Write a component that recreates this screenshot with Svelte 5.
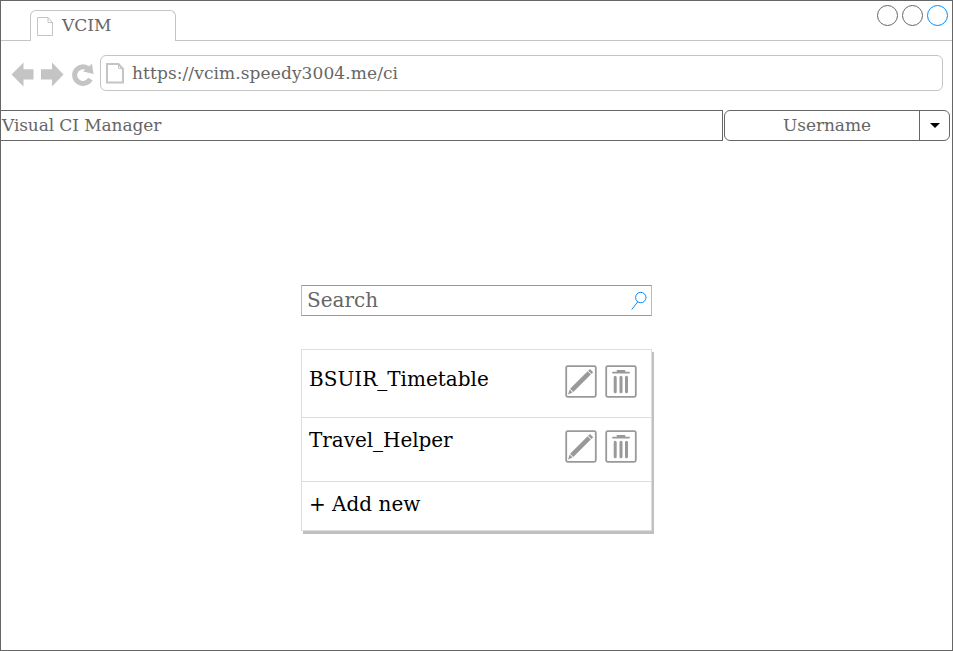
<script>
  const projects = [
    { name: 'BSUIR_Timetable', cls: 'first' },
    { name: 'Travel_Helper', cls: 'second' }
  ];
</script>

<div class="window">
  <header class="tabs">
    <div class="lead"></div>
    <div class="tab">
      <svg width="16" height="20" viewBox="0 0 16 20" fill="none" stroke="#c4c4c4"><path d="M.5.5H11L15.500 5.500V18.500H.5ZM11 .5V5.500H15.500" /></svg>
      <span>VCIM</span>
    </div>
    <div class="rest">
      <svg width="76" height="24" viewBox="0 0 76 24" fill="none" stroke="#666">
        <circle cx="11.500" cy="11.500" r="10" /><circle cx="36.500" cy="11.500" r="10" /><circle cx="61.500" cy="11.500" r="10" stroke="#008cff" />
      </svg>
    </div>
  </header>

  <div class="toolbar">
    <svg class="nav" width="84" height="26" viewBox="0 0 84 26" fill="#c4c4c4">
      <path d="M.5 12.500L12.500 .5V7.200H22.500V17.500H12.500V24.500Z" />
      <path d="M52.500 12.500L41 .5V7.200H30V17.500H41V24.500Z" />
      <path d="M79.300 17A8.300 8.300 0 1 1 77.300 6.800" fill="none" stroke="#c4c4c4" stroke-width="5" />
      <path d="M81 1.800L82.500 12L72 9.500Z" />
    </svg>
    <div class="address">
      <svg width="18" height="21" viewBox="0 0 18 21" fill="none" stroke="#c4c4c4" stroke-width="2"><path d="M1 1H12.500L17 6V19.500H1Z" /><path d="M12.500 1V5.500H17" stroke-width="1" /></svg>
      <span>https://vcim.speedy3004.me/ci</span>
    </div>
  </div>

  <div class="appbar">
    <div class="title">Visual CI Manager</div>
    <div class="user">
      <span class="name">Username</span>
      <span class="arrow"><svg width="10" height="5" viewBox="0 0 10 5"><path d="M0 0H10L5 5Z" /></svg></span>
    </div>
  </div>

  <main>
    <div class="search">
      <span>Search</span>
      <svg width="16" height="19" viewBox="0 0 16 19" fill="none" stroke="#008cff"><circle cx="9.800" cy="6.500" r="5.200" /><path d="M6.800 10.800L.7 18.500" /></svg>
    </div>
    <div class="list">
      {#each projects as p}
        <div class="row {p.cls}">
          <span>{p.name}</span>
          <div class="actions">
            <svg width="32" height="33" viewBox="0 0 32 33" fill="#999">
              <rect x="1.200" y="1.200" width="29.600" height="30.600" rx="1.500" fill="none" stroke="#999" stroke-width="1.800" />
              <path d="M22.600 6.300L25.800 9.500L8.300 27L5.100 23.800ZM4.700 24.600L7.500 27.400L3 29.500ZM23.200 5.700L25 4L28.200 7.200L26.400 8.900Z" />
            </svg>
            <svg width="32" height="33" viewBox="0 0 32 33" fill="none" stroke="#999">
              <rect x="1.200" y="1.200" width="29.600" height="30.600" rx="1.500" stroke-width="1.800" />
              <path d="M8 7.600H24M12.500 6H19.500" stroke-width="1.900" stroke-linecap="round" />
              <path d="M10.200 12.300V26.800M16 12.300V26.800M21.500 12.300V26.800" stroke-width="3" stroke-linecap="round" />
            </svg>
          </div>
        </div>
      {/each}
      <div class="row add"><span>+ Add new</span></div>
    </div>
  </main>
</div>

<style>
  :global(body) { margin: 0; background: #fff; }
  svg { display: block; flex: none; }
  .window {
    box-sizing: border-box; width: 953px; height: 651px; border: 1px solid #666;
    font: 17px/20px "DejaVu Serif", serif; color: #666; background: #fff;
    display: flex; flex-direction: column; overflow: hidden; white-space: nowrap;
  }
  .window div, header { box-sizing: border-box; }
  .tabs { display: flex; height: 40px; flex: none; }
  .lead { width: 29px; border-bottom: 1px solid #c4c4c4; }
  .tab {
    width: 146px; height: 31px; margin-top: 9px; border: 1px solid #c4c4c4; border-bottom: 0;
    border-radius: 6px 6px 0 0; display: flex; gap: 9px; padding: 6px 0 0 6px;
  }
  .tab span { margin-top: -2px; }
  .rest { flex: 1; border-bottom: 1px solid #c4c4c4; display: flex; justify-content: flex-end; padding: 3px 0 0; }
  .toolbar { display: flex; height: 69px; flex: none; padding: 14px 9px 0 10px; }
  .nav { margin: 7px 5px 0 0; }
  .address {
    flex: 1; height: 36px; border: 1px solid #c4c4c4; border-radius: 6px;
    display: flex; padding: 7px 0 0 5px; gap: 8px;
  }
  .address span { letter-spacing: .1px; }
  .appbar { display: flex; height: 31px; flex: none; gap: 1px; }
  .title { width: 723px; margin-left: -1px; border: 1px solid #666; padding: 4px 0 0 1px; letter-spacing: -.1px; }
  .user { width: 226px; border: 1px solid #666; border-radius: 6px; display: flex; }
  .name { flex: 1; text-align: center; padding: 4px 0 0 10px; letter-spacing: -.06px; }
  .arrow { width: 29px; border-left: 1px solid #666; display: flex; align-items: center; justify-content: center; }
  main { width: 351px; margin: 144px 0 0 300px; font-size: 20px; line-height: 24px; }
  .search { height: 31px; border: 1px solid #999; border-left-color: #bbb; border-right-color: #bbb; display: flex; justify-content: space-between; padding: 2px 4px 0 5px; }
  .search svg { margin-top: 3px; }
  .list { margin-top: 33px; height: 182px; border: 1px solid #ddd; box-shadow: 2px 3px 0 #c0c0c0; color: #000; background: #fff; }
  .row { display: flex; justify-content: space-between; padding: 0 14px 0 7px; border-bottom: 1px solid #ddd; }
  .first { height: 68px; padding-top: 15px; }
  .first span { margin-top: 2px; }
  .second { height: 64px; padding-top: 12px; }
  .second span { margin-top: -2px; letter-spacing: -.05px; }
  .add { border: 0; padding-top: 10px; }
  .actions { display: flex; gap: 8px; }
</style>
